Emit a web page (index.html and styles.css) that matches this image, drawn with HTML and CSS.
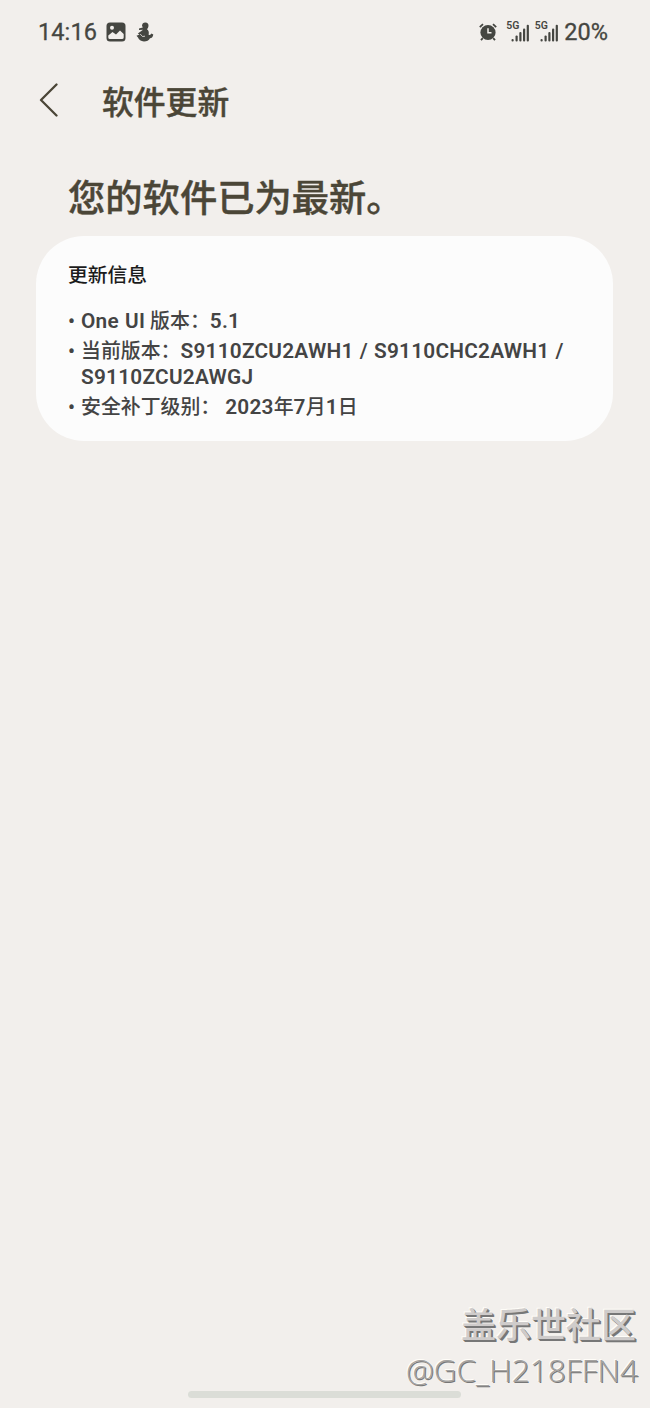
FILE: index.html
```
<!DOCTYPE html>
<html lang="zh-CN">
  <head>
    <meta charset="UTF-8" />
    <title>软件更新</title>
    <link rel="stylesheet" href="styles.css" />
  </head>
  <body>
    <div class="status-bar">
      <span class="time">14:16</span>
      <svg class="icon-picture" width="20" height="20" viewBox="0 0 20 20">
        <rect x="0.5" y="0.5" width="19" height="19" rx="3.5" fill="#454641" />
        <circle cx="6" cy="5.7" r="2" fill="#f2efec" />
        <path d="M2.3 13.5L6.5 10L10 12.5L14 8.5L17.7 12V15.5Q17.7 17 16 17H4Q2.3 17 2.3 15.5Z" fill="#f2efec" />
      </svg>
      <svg class="icon-app" width="18" height="20" viewBox="0 0 18 20" fill="#454641">
        <path d="M6 3.8Q6.3 0.5 9.3 0.5Q12.7 0.7 12.5 4Q12.3 6 11 7.2Q13.5 9 12.6 12.7Q14.5 13.4 15.4 11.6L17.3 12.4Q16.8 15.8 14 16.2Q12.2 19.5 8 19.5Q3.2 19.2 2 15.6L0.5 13.8L3.5 12.4L1.8 11.6L5 9.3L7 7.7L3 8V6.6L6.8 5.6Z" />
        <path d="M4.2 12L6.5 14.5L9 14.2" fill="none" stroke="#f2efec" stroke-width="0.8" />
      </svg>
      <div class="status-right">
        <svg class="icon-alarm" width="18" height="18" viewBox="0 0 18 18">
          <path d="M0.8 4.2L4 1.2M17.2 4.2L14 1.2M3.8 15.2L2 17.2M14.2 15.2L16 17.2" stroke="#454641" stroke-width="1.8" />
          <circle cx="9" cy="9.5" r="7.6" fill="#454641" />
          <path d="M9 5.2V9.8H12.5" fill="none" stroke="#f2efec" stroke-width="1.5" />
        </svg>
        <div class="signal">
          <span class="network">5G</span>
          <svg width="18" height="18" viewBox="0 0 18 18" fill="#454641">
            <rect x="0.5" y="15" width="2.2" height="2.5" rx="1" />
            <rect x="4.5" y="11.5" width="2.2" height="6" rx="1" />
            <rect x="8.3" y="8" width="2.2" height="9.5" rx="1" />
            <rect x="12" y="4.5" width="2.2" height="13" rx="1" />
            <rect x="15.7" y="0.8" width="2.2" height="16.7" rx="1" />
          </svg>
        </div>
        <div class="signal">
          <span class="network">5G</span>
          <svg width="18" height="18" viewBox="0 0 18 18" fill="#454641">
            <rect x="0.5" y="15" width="2.2" height="2.5" rx="1" />
            <rect x="4.5" y="11.5" width="2.2" height="6" rx="1" />
            <rect x="8.3" y="8" width="2.2" height="9.5" rx="1" />
            <rect x="12" y="4.5" width="2.2" height="13" rx="1" />
            <rect x="15.7" y="0.8" width="2.2" height="16.7" rx="1" />
          </svg>
        </div>
        <span class="battery">20%</span>
      </div>
    </div>

    <div class="toolbar">
      <svg width="20" height="34" viewBox="0 0 20 34">
        <path d="M17.5 1.5L2 17L17.5 32.5" fill="none" stroke="#4b4637" stroke-width="2.3" stroke-linecap="round" stroke-linejoin="round" />
      </svg>
      <h1>软件更新</h1>
    </div>

    <h2>您的软件已为最新。</h2>

    <div class="card">
      <h3>更新信息</h3>
      <ul>
        <li><p><b>One UI</b> 版本：<b>5.1</b></p></li>
        <li><p>当前版本：<b>S9110ZCU2AWH1 / S9110CHC2AWH1 /</b><br /><b>S9110ZCU2AWGJ</b></p></li>
        <li><p>安全补丁级别： <b>2023</b>年<b>7</b>月<b>1</b>日</p></li>
      </ul>
    </div>

    <div class="nav-handle"></div>

    <div class="watermark">
      <div class="community">盖乐世社区</div>
      <div class="user">@GC_H218FFN4</div>
    </div>
  </body>
</html>
```
FILE: styles.css
```
* {
  box-sizing: border-box;
}

body {
  position: relative;
  display: flex;
  flex-direction: column;
  height: 1408px;
  margin: 0;
  background-color: #f2efec;
  font-family: Roboto, "Noto Sans CJK SC", sans-serif;
  overflow: hidden;
}

h1,
h2,
h3,
p,
ul {
  margin: 0;
  padding: 0;
}

/* status bar */
.status-bar {
  display: flex;
  align-items: center;
  height: 64px;
  padding: 0 42px 0 38px;
  color: #454641;
  font-size: 23.5px;
}

.time {
  width: 68px;
  letter-spacing: 0.1px;
  -webkit-text-stroke: 0.3px #454641;
}

.icon-app {
  margin-left: 10px;
}

.status-right {
  display: flex;
  align-items: center;
  margin-left: auto;
}

.icon-alarm {
  margin-right: 9px;
}

.signal {
  position: relative;
  width: 28.5px;
  height: 20px;
  padding: 2px 0 0 5px;
}

.signal svg {
  display: block;
}

.network {
  position: absolute;
  top: -2px;
  left: 0;
  font-size: 10.5px;
  line-height: 12px;
  font-weight: 600;
}

.battery {
  margin-left: 1px;
  -webkit-text-stroke: 0.3px #454641;
}

/* title row */
.toolbar {
  display: flex;
  align-items: center;
  height: 72px;
  padding-left: 39px;
  color: #4b4637;
}

h1 {
  margin-left: 43px;
  padding-top: 5px;
  font-size: 31.8px;
  line-height: 48px;
  font-weight: 500;
  -webkit-text-stroke: 0.4px #4b4637;
}

h2 {
  margin: 35px 0 9px 68px;
  color: #4b4637;
  font-size: 37.3px;
  line-height: 56px;
  font-weight: 500;
  -webkit-text-stroke: 0.4px #4b4637;
}

/* update info */
.card {
  width: 577px;
  height: 205px;
  margin-left: 36px;
  padding: 26px 32px;
  border-radius: 48px;
  background-color: #fcfcfc;
}

h3 {
  color: #1b1b1b;
  font-size: 19.8px;
  line-height: 28px;
  font-weight: 500;
}

ul {
  margin-top: 19px;
  list-style: none;
  color: #444;
  font-size: 19.9px;
  line-height: 25.4px;
  font-weight: 500;
}

li {
  display: flex;
  margin-bottom: 5px;
}

li::before {
  content: "•";
  flex: none;
  width: 13px;
}

b {
  font-size: 20.8px;
  line-height: 1;
  font-weight: 600;
  letter-spacing: 0.25px;
  word-spacing: 0.7px;
}

.nav-handle {
  width: 273px;
  height: 7px;
  margin: auto 0 10px 188px;
  border-radius: 4px;
  background-color: #dbddd7;
}

/* embossed signature over the page */
.watermark {
  position: absolute;
  right: 12px;
  bottom: 16px;
  text-align: right;
  white-space: nowrap;
}

.community {
  margin-right: 2px;
  color: #cfcccb;
  font-size: 35px;
  line-height: 43px;
  font-weight: 500;
  text-shadow: 1px 1px 0 #777, 2px 2px 0 #777, -1px -1px 0 #fffdf8;
}

.user {
  color: #a5a3a1;
  font-family: "Open Sans", "Noto Sans", sans-serif;
  font-size: 31.5px;
  line-height: 44px;
  font-weight: 300;
  text-shadow: 1px 1px 0 #777, -1px -1px 0 #fffdf8;
}
```
